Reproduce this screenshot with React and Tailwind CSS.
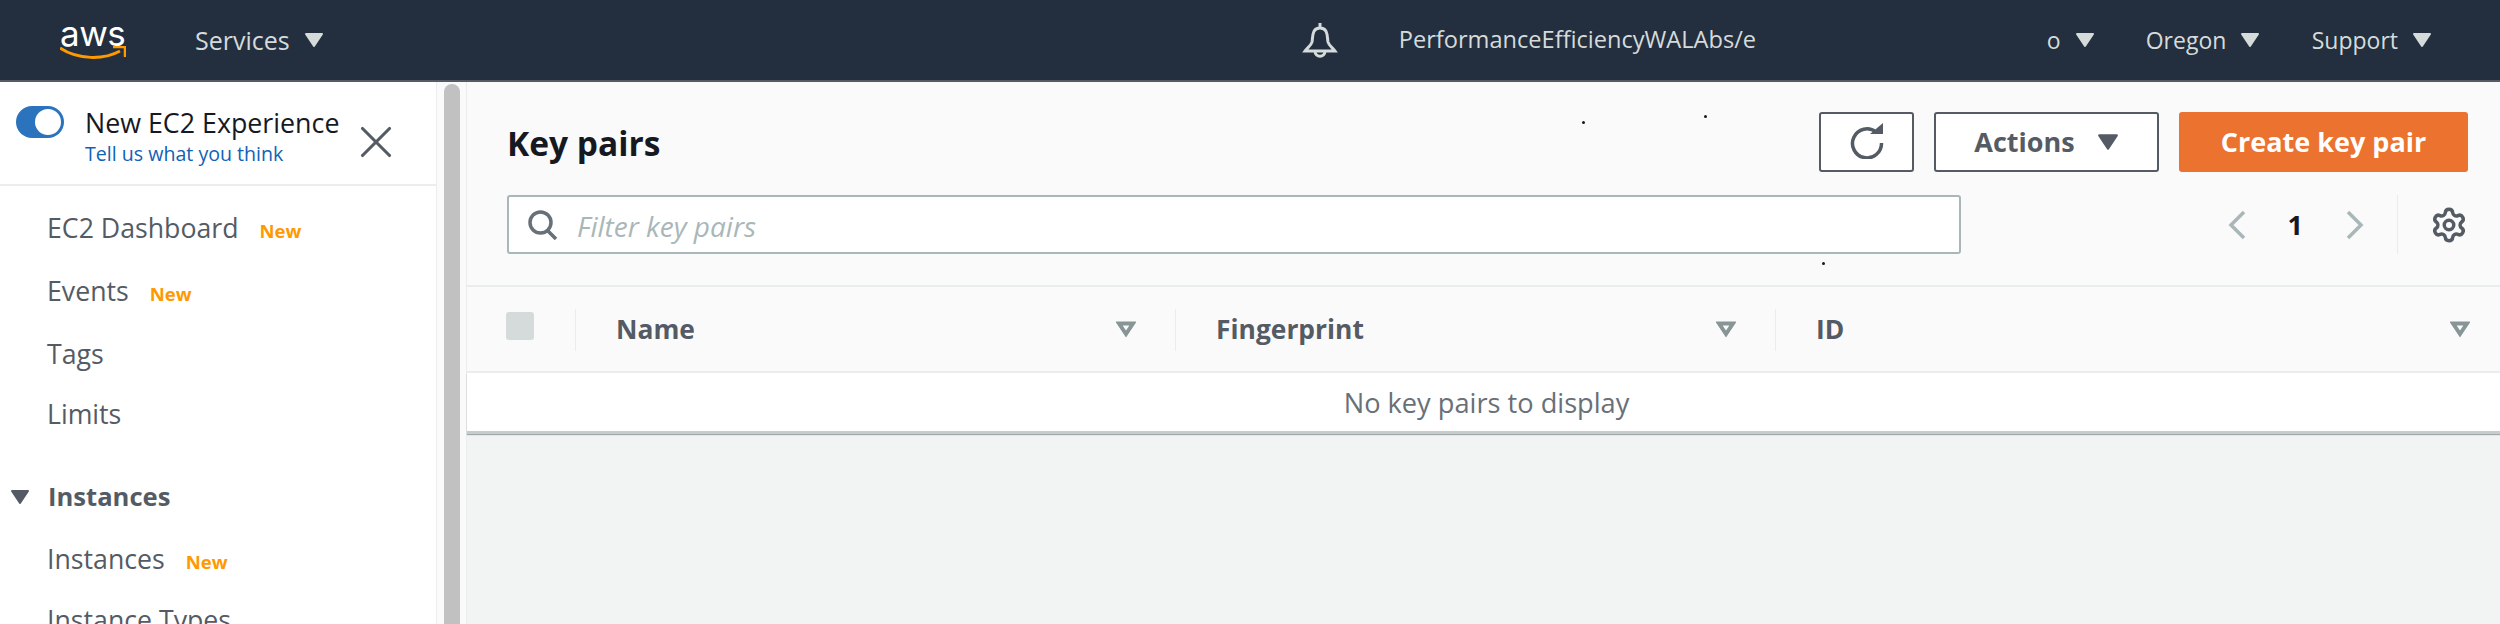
import React from 'react';
import { Settings, X } from 'lucide-react';

const Caret = ({ className }) => (
  <svg viewBox="0 0 20 16" className={className} fill="currentColor" stroke="currentColor" strokeWidth="2" strokeLinejoin="round">
    <path d="M2 2 H18 L10 14 Z" />
  </svg>
);

const FilterIcon = () => (
  <svg viewBox="0 0 20 17" className="w-[20px] h-[17px] text-[#879596]" fill="none" stroke="currentColor" strokeWidth="4">
    <path d="M3 2.5 H17 L10 13 Z" />
  </svg>
);

const Chevron = ({ d, className }) => (
  <svg viewBox="0 0 18 30" className={`w-[18px] h-[30px] shrink-0 ${className}`} fill="none" stroke="#aab7b8" strokeWidth="3.5">
    <path d={d} />
  </svg>
);

const NavItem = ({ label, isNew, height = 'h-[62px]' }) => (
  <div className={`flex items-center ${height} pl-[47px] text-[#545b64] text-[26.7px]`}>
    <span>{label}</span>
    {isNew && <span className="ml-[21px] text-[#ff9900] text-[18.5px] font-bold mt-[6px]">New</span>}
  </div>
);

const TopMenu = ({ label, width }) => (
  <div className={`flex items-center ${width}`}>
    <span className="text-[#d5dbdb] text-[23px]">{label}</span>
    <Caret className="w-[20px] h-[16px] text-[#d5dbdb] ml-[14px]" />
  </div>
);

const ColHeader = ({ label, width, pr }) => (
  <div className={`${width} ${pr} flex items-center justify-between pl-[41px] relative`}>
    <span className="absolute left-0 top-[22px] h-[42px] w-[1px] bg-[#eaeded]" />
    <span className="text-[#545b64] text-[26.4px] font-bold pt-[2px]">{label}</span>
    <FilterIcon />
  </div>
);

export default function App() {
  return (
    <div className="h-screen overflow-hidden flex flex-col bg-white font-['Open_Sans','Noto_Sans',sans-serif]">
      {/* top bar */}
      <header className="h-[82px] shrink-0 bg-[#232f3e] border-b-2 border-[#545b64] flex items-center pl-[60px] pr-[68px]">
        <div className="w-[135px] flex flex-col items-start">
          <span className="text-white text-[35px] leading-[30px] font-['Inter',sans-serif] tracking-[-0.5px]">aws</span>
          <svg viewBox="0 0 66 16" className="w-[66px] h-[16px] -mt-[2px]" fill="none">
            <path d="M0 2 C18 14 44 14 60 5" stroke="#ff9900" strokeWidth="3" />
            <path d="M53 1 H65 V11" stroke="#ff9900" strokeWidth="2.5" />
          </svg>
        </div>
        <span className="text-[#d5dbdb] text-[25px] pt-[2px]">Services</span>
        <Caret className="w-[20px] h-[16px] text-[#d5dbdb] ml-[14px]" />
        <div className="ml-[978px] w-[97px]">
          <svg viewBox="0 0 36 36" className="w-[36px] h-[36px]" fill="none" stroke="#d5dbdb" strokeWidth="3">
            <path d="M18 1 V6 M18 6 C10 6 11 14 10 20 C9 24 5 26 3 29 H33 C31 26 27 24 26 20 C25 14 26 6 18 6 Z M13 29 C13 36 23 36 23 29" />
          </svg>
        </div>
        <div className="w-[357px] overflow-hidden whitespace-nowrap text-[#d5dbdb] text-[23.6px]">PerformanceEfficiencyWALAbs/e</div>
        <div className="flex-1" />
        <TopMenu label="o" width="w-[99px]" />
        <TopMenu label="Oregon" width="w-[166px]" />
        <TopMenu label="Support" />
      </header>

      <div className="flex-1 flex min-h-0">
        {/* sidebar */}
        <aside className="w-[437px] shrink-0 border-r border-[#eaeded] overflow-hidden">
          <div className="h-[104px] border-b-2 border-[#eaeded] flex pl-[16px]">
            <div className="mt-[24px] w-[48px] h-[32px] rounded-full bg-[#2b74bd] relative">
              <span className="absolute right-[3px] top-[3px] w-[26px] h-[26px] rounded-full bg-white" />
            </div>
            <div className="ml-[21px] mt-[23px] w-[264px]">
              <div className="text-[#16191f] text-[26.8px] leading-[36px] whitespace-nowrap">New EC2 Experience</div>
              <div className="text-[#0f62b5] text-[19.6px] leading-[26px] font-medium whitespace-nowrap">Tell us what you think</div>
            </div>
            <X className="mt-[33px] w-[54px] h-[54px] text-[#545b64]" strokeWidth={1.4} />
          </div>
          <div className="pt-[11px]">
            <NavItem label="EC2 Dashboard" isNew />
            <NavItem label="Events" isNew height="h-[64px]" />
            <NavItem label="Tags" />
            <NavItem label="Limits" height="h-[58px]" />
            <div className="mt-[23px] flex items-center h-[62px] pl-[10px] text-[#545b64] text-[25.6px] font-bold">
              <Caret className="w-[20px] h-[16px] mr-[18px]" />
              <span>Instances</span>
            </div>
            <NavItem label="Instances" isNew />
            <NavItem label="Instance Types" height="h-[60px]" />
          </div>
        </aside>

        {/* scrollbar gutter */}
        <div className="w-[30px] shrink-0 pl-[7px] pt-[2px] bg-[#fafafa] border-r border-[#eaeded]">
          <div className="w-[16px] h-full bg-[#c1c1c1] rounded-t-full" />
        </div>

        {/* main */}
        <main className="flex-1 min-w-0 flex flex-col bg-[#f2f3f3] relative">
          <div className="bg-[#fafafa] pt-[30px] pl-[40px] pr-[32px] pb-[31px]">
            <div className="flex items-center h-[60px]">
              <h1 className="flex-1 text-[#16191f] text-[33.5px] font-bold pt-[2px]">Key pairs</h1>
              <button className="w-[95px] h-[60px] flex items-center justify-center bg-white border-2 border-[#545b64] rounded-[3px]">
                <svg viewBox="0 0 34 36" className="w-[34px] h-[36px] -mt-[2px]" fill="none" stroke="#545b64" strokeWidth="3.5">
                  <path d="M26 9 A14.5 14.5 0 1 0 31.5 20" />
                  <path d="M20 11 H33 V0 Z" fill="#545b64" stroke="none" />
                </svg>
              </button>
              <button className="ml-[20px] w-[225px] h-[60px] flex items-center justify-center bg-white border-2 border-[#545b64] rounded-[3px] text-[#545b64] text-[27px] font-bold">
                Actions
                <Caret className="w-[22px] h-[18px] ml-[22px]" />
              </button>
              <button className="ml-[20px] w-[289px] h-[60px] bg-[#ec7230] rounded-[3px] text-white text-[27px] font-bold">Create key pair</button>
            </div>
            <div className="flex items-center h-[59px] mt-[23px]">
              <div className="w-[1454px] h-full flex items-center bg-white border-2 border-[#aab7b8] rounded-[3px] pl-[19px]">
                <svg viewBox="0 0 30 30" className="w-[30px] h-[30px]" fill="none" stroke="#687078" strokeWidth="3.5">
                  <circle cx="12.5" cy="12.5" r="10.5" />
                  <path d="M19 20 L28 29" />
                </svg>
                <span className="ml-[19px] text-[#aab7b8] text-[28px] italic pt-[2px]">Filter key pairs</span>
              </div>
              <div className="flex-1 flex items-center h-full">
                <Chevron d="M16 2 L3 15 L16 28" className="ml-[267px]" />
                <span className="ml-[42px] text-[#16191f] text-[27px] font-bold pt-[2px]">1</span>
                <Chevron d="M2 2 L15 15 L2 28" className="ml-[43px]" />
                <span className="ml-[33px] w-[1px] h-full bg-[#eaeded]" />
                <Settings className="ml-[32px] w-[38px] h-[38px] text-[#545b64] shrink-0" strokeWidth={2.2} />
              </div>
            </div>
          </div>
          <div className="h-[88px] bg-[#fafafa] border-y-2 border-[#eaeded] flex">
            <div className="w-[108px] pl-[39px] pt-[25px]">
              <div className="w-[28px] h-[28px] bg-[#d5dbdb] rounded-[3px]" />
            </div>
            <ColHeader label="Name" width="w-[600px]" pr="pr-[39px]" />
            <ColHeader label="Fingerprint" width="w-[600px]" pr="pr-[39px]" />
            <ColHeader label="ID" width="flex-1" pr="pr-[30px]" />
          </div>
          <div className="h-[61px] pt-[3px] pl-[6px] bg-white border-b-[3px] border-[#c5cdcd] shadow-[0_1px_1px_0_rgba(84,91,100,0.5)] flex items-center justify-center text-[#687078] text-[27.2px]">No key pairs to display</div>

          {/* stray specks in the capture */}
          <span className="absolute left-[1115px] top-[39px] w-[3px] h-[3px] rounded-full bg-[#16191f]" />
          <span className="absolute left-[1237px] top-[33px] w-[3px] h-[3px] rounded-full bg-[#16191f]" />
          <span className="absolute left-[1355px] top-[180px] w-[3px] h-[3px] rounded-full bg-[#16191f]" />
        </main>
      </div>
    </div>
  );
}
